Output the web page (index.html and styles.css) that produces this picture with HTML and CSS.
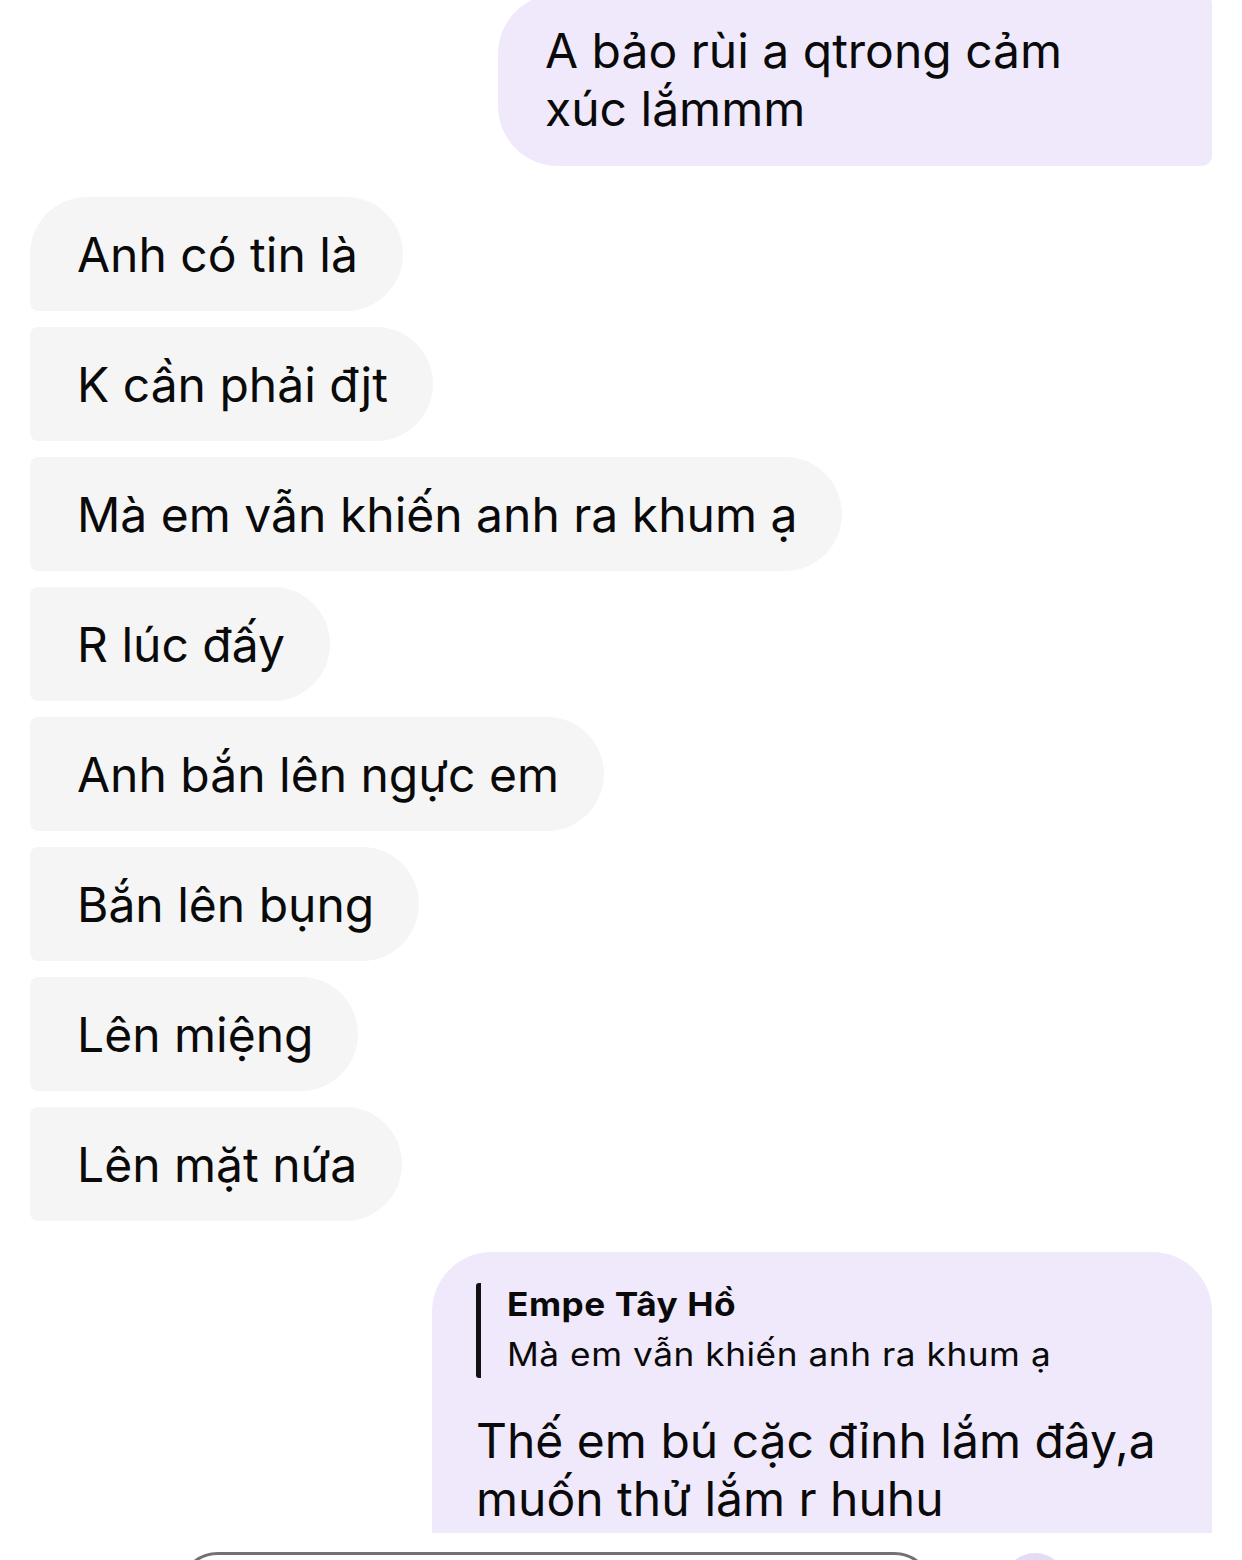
FILE: index.html
```html
<!DOCTYPE html>
<html lang="vi">
<head>
<meta charset="utf-8">
<title>Chat</title>
<link rel="stylesheet" href="styles.css">
</head>
<body>
<div class="screen">
  <div class="thread">
    <div class="msg out first-out">A bảo rùi a qtrong cảm<br>xúc lắmmm</div>

    <div class="group-in">
      <div class="msg in top">Anh có tin là</div>
      <div class="msg in">K cần phải đjt</div>
      <div class="msg in">Mà em vẫn khiến anh ra khum ạ</div>
      <div class="msg in">R lúc đấy</div>
      <div class="msg in">Anh bắn lên ngực em</div>
      <div class="msg in">Bắn lên bụng</div>
      <div class="msg in">Lên miệng</div>
      <div class="msg in">Lên mặt nứa</div>
    </div>

    <div class="msg out reply">
      <div class="quote">
        <div class="quote-name">Empe Tây Hồ</div>
        <div class="quote-text">Mà em vẫn khiến anh ra khum ạ</div>
      </div>
      <div class="reply-text">Thế em bú cặc đỉnh lắm đây,a<br>muốn thử lắm r huhu</div>
    </div>
  </div>
  <div class="composer">
    <div class="input-pill"></div>
    <div class="send-circle"></div>
  </div>
</div>
</body>
</html>
```

FILE: styles.css
```css
* { box-sizing: border-box; }
html, body {
  margin: 0;
  padding: 0;
  background: #ffffff;
}
body {
  font-family: "Inter", "Noto Sans", "Liberation Sans", sans-serif;
  color: #0a0a0a;
  -webkit-font-smoothing: antialiased;
}
.screen {
  width: 1242px;
  height: 1560px;
  overflow: hidden;
  display: flex;
  flex-direction: column;
}
.thread {
  flex: 0 0 1533px;
  height: 1533px;
  overflow: hidden;
  display: flex;
  flex-direction: column;
  padding: 0 30px;
}
.msg {
  font-size: 48px;
  line-height: 58px;
}
.out {
  align-self: flex-end;
  background: #efe9fb;
}
.first-out {
  flex-shrink: 0;
  width: 714px;
  margin-top: -6px;
  padding: 28px 30px 28px 47px;
  border-radius: 60px 10px 10px 60px;
}
.group-in {
  flex-shrink: 0;
  display: flex;
  flex-direction: column;
  align-items: flex-start;
  gap: 16px;
  margin-top: 31px;
}
.in {
  background: #f5f5f5;
  height: 114px;
  padding: 29px 45px 27px 47px;
  border-radius: 8px 57px 57px 8px;
  white-space: nowrap;
}
.in.top {
  border-top-left-radius: 57px;
}
.reply {
  flex-shrink: 0;
  width: 780px;
  margin-top: 31px;
  padding: 31px 40px 30px 44px;
  border-radius: 60px 60px 0 0;
}
.quote {
  border-left: 5px solid #111;
  border-radius: 3px;
  padding-left: 26px;
}
.quote-name,
.quote-text {
  font-size: 32px;
  letter-spacing: 0.5px;
  white-space: nowrap;
  transform: scaleX(1.1);
  transform-origin: left center;
}
.quote-name {
  line-height: 44px;
  font-weight: 700;
}
.quote-text {
  margin-top: 4px;
  line-height: 47px;
}
.reply-text {
  margin-top: 34px;
  font-size: 48px;
  line-height: 58px;
}
.composer {
  flex: 1 1 auto;
  overflow: hidden;
  background: #ffffff;
  display: flex;
  align-items: flex-start;
  padding-top: 19px;
  padding-left: 178px;
}
.input-pill {
  flex-shrink: 0;
  width: 756px;
  height: 80px;
  border: 3px solid #727272;
  border-radius: 40px;
}
.send-circle {
  flex-shrink: 0;
  width: 64px;
  height: 64px;
  margin-left: 69px;
  margin-top: 1px;
  border-radius: 50%;
  background: #e4dbf7;
}
```
